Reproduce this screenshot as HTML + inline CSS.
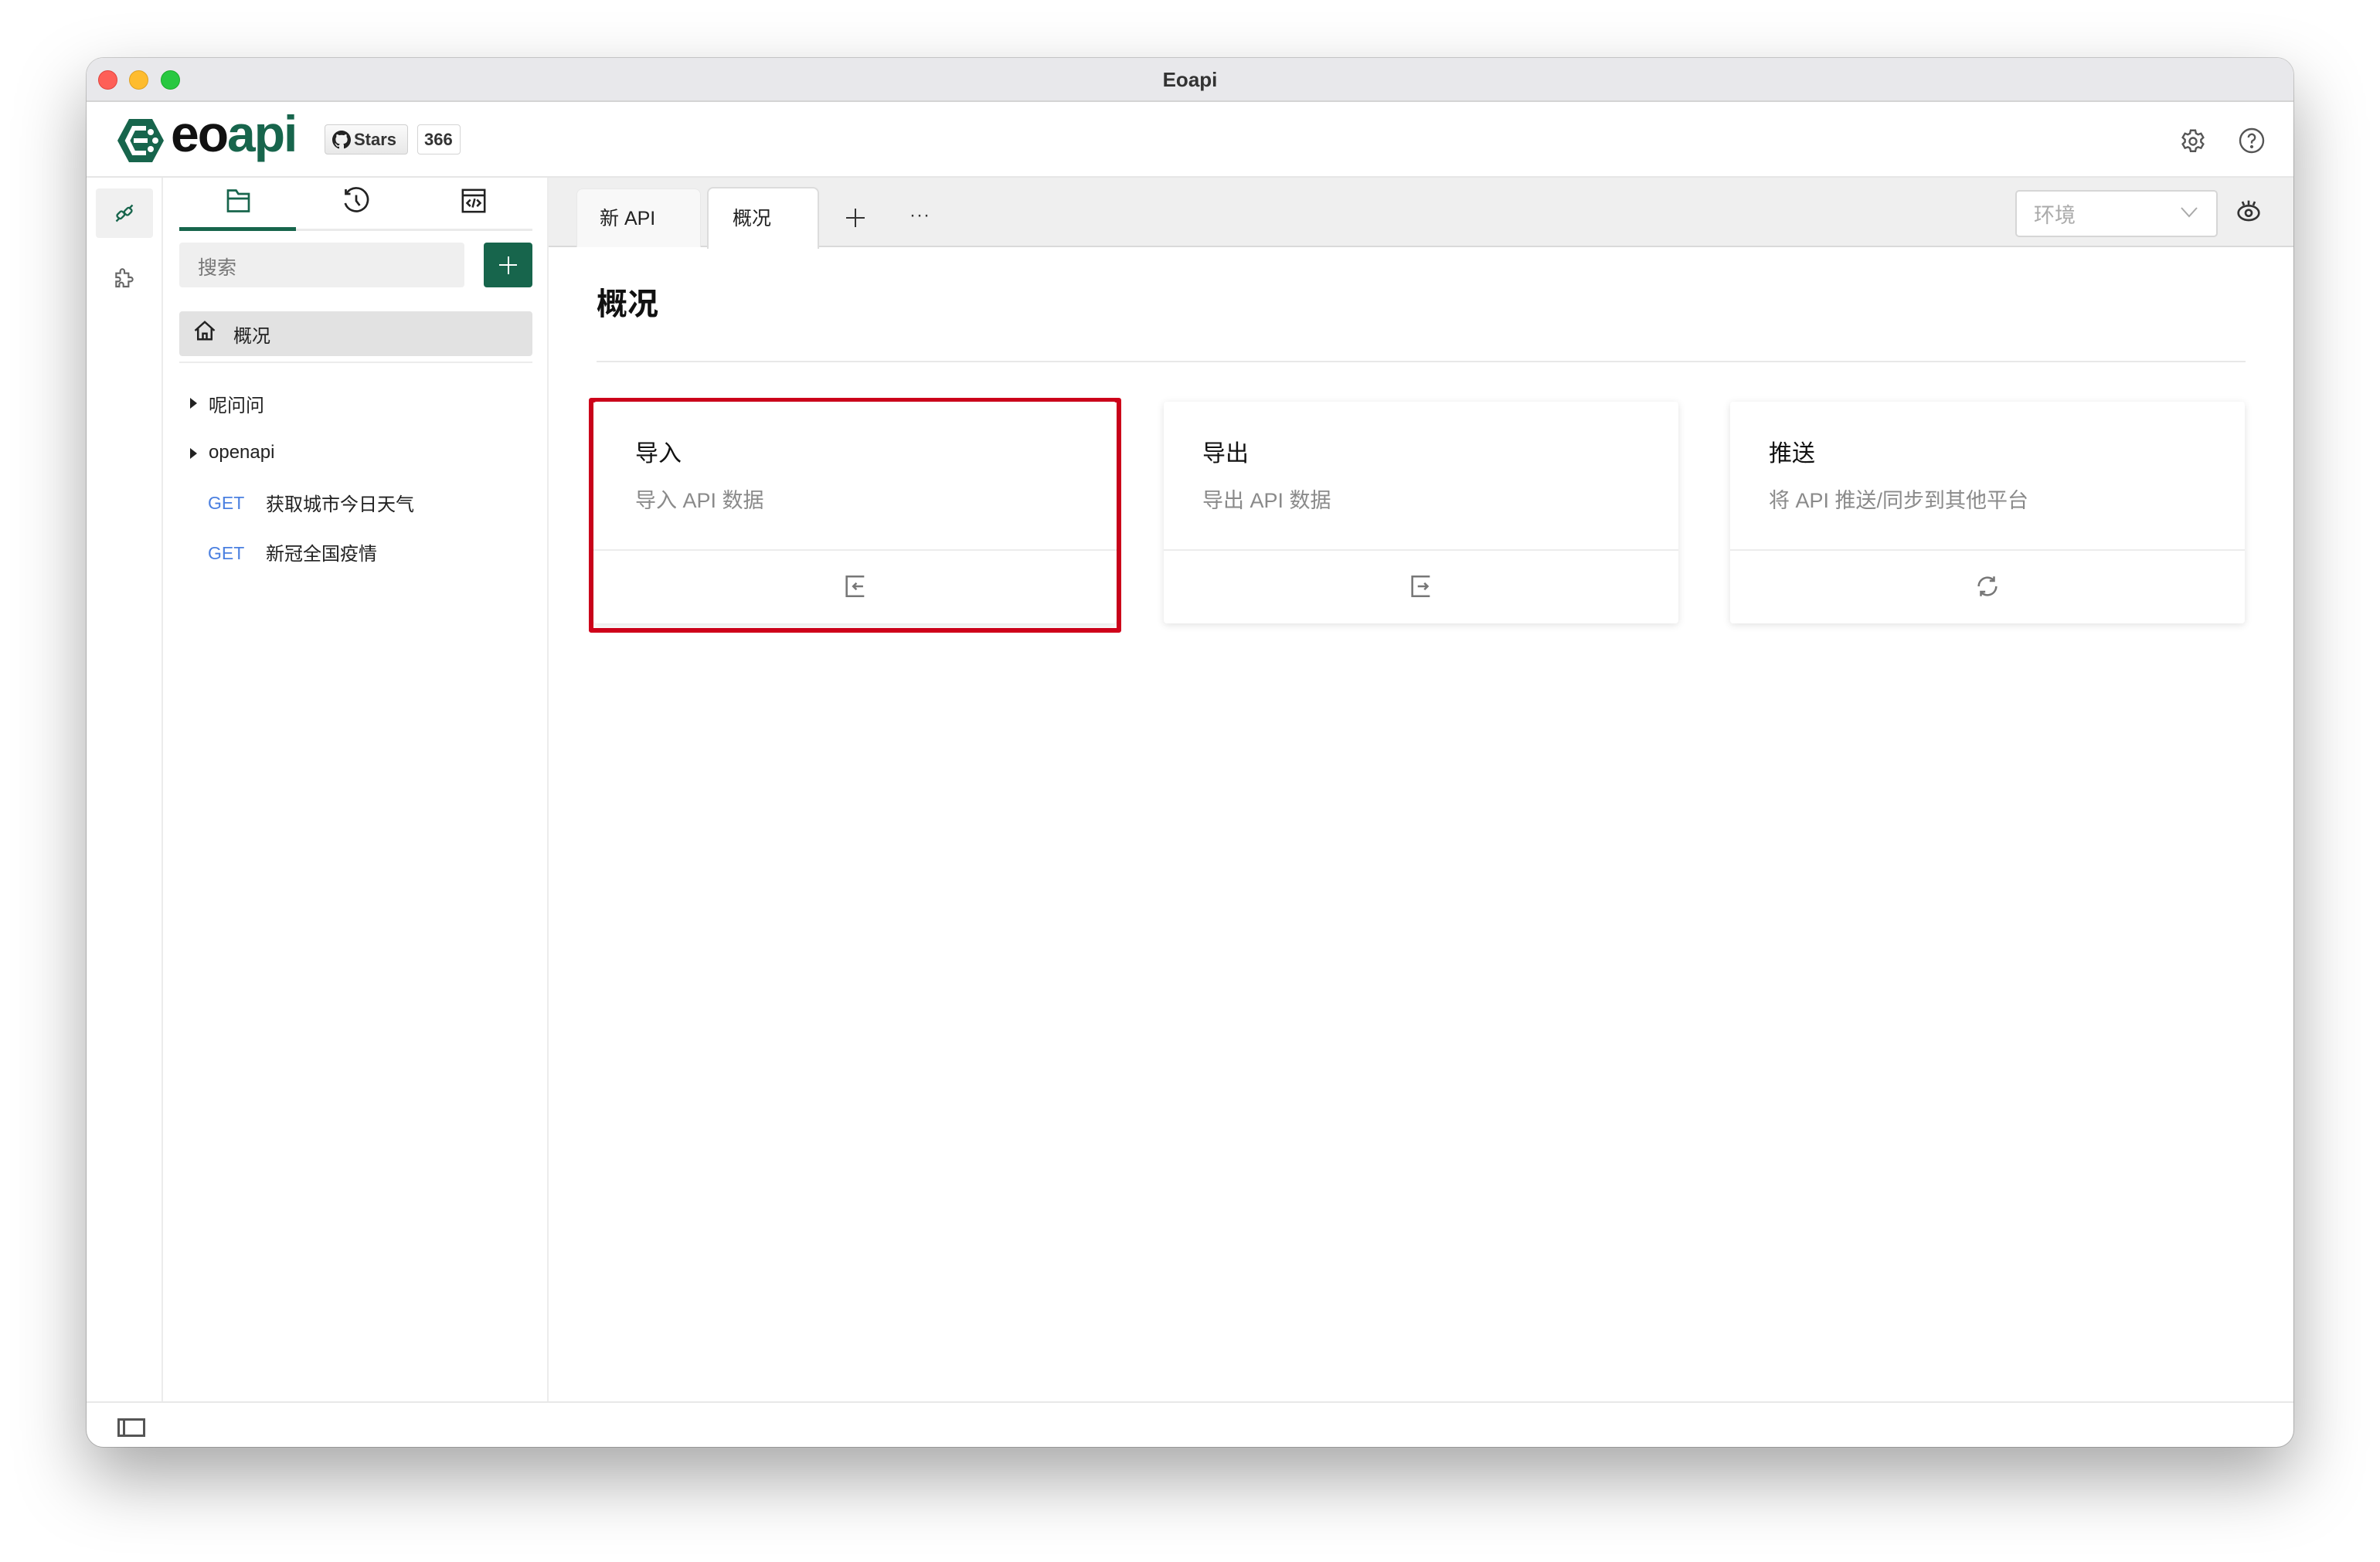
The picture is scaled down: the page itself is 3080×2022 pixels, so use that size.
<!DOCTYPE html>
<html><head><meta charset="utf-8"><style>
*{box-sizing:border-box;margin:0;padding:0}
body{width:3080px;height:2022px;background:#fff;position:relative;overflow:hidden;font-family:"Liberation Sans","Noto Sans CJK SC",sans-serif;color:#222}
.abs{position:absolute}
#win{position:absolute;left:112px;top:75px;width:2856px;height:1798px;border-radius:22px;background:#fff;box-shadow:0 40px 90px rgba(0,0,0,.35),0 0 0 1px rgba(0,0,0,.18);overflow:hidden}
.tl{position:absolute;top:16px;width:25px;height:25px;border-radius:50%}
.txt{white-space:nowrap}
.card{position:absolute;top:445px;height:287px;background:#fff;box-shadow:0 2px 10px rgba(0,0,0,.12);border-radius:4px}
.card .t{position:absolute;left:54px;top:42px;font-size:30px;color:#111}
.card .d{position:absolute;left:54px;top:106px;font-size:27px;color:#8a8a8a}
.card .ln{position:absolute;left:0;right:0;top:191px;height:2px;background:#ececec}
.card svg{position:absolute;left:50%;top:222px;margin-left:-17px}
</style></head><body>
<div id="win">
 <div class="abs" style="left:0;top:0;width:2856px;height:57px;background:#e8e8eb;border-bottom:2px solid #d4d4d4"></div>
 <div class="tl" style="left:15px;background:#fe5f57;border:1px solid #e0443e"></div>
 <div class="tl" style="left:55px;background:#febc2e;border:1px solid #dea123"></div>
 <div class="tl" style="left:96px;background:#28c840;border:1px solid #1aab29"></div>
 <div class="abs txt" style="left:0;width:2856px;top:13px;text-align:center;font-size:26px;font-weight:bold;color:#333">Eoapi</div>
 <div class="abs" style="left:0;top:57px;width:2856px;height:98px;border-bottom:2px solid #e6e6e6"></div>
 <svg class="abs" style="left:39px;top:76px" width="62" height="62" viewBox="0 0 62 62"><path d="M16 3H46L61 31L46 59H16L1 31Z" fill="#17654c"/><path d="M38 15H22L14 31L22 47H38" fill="none" stroke="#fff" stroke-width="6"/><line x1="22" y1="31" x2="40" y2="31" stroke="#fff" stroke-width="6"/><circle cx="44" cy="20" r="4" fill="#fff"/><circle cx="50" cy="31" r="4" fill="#fff"/><circle cx="44" cy="42" r="4" fill="#fff"/></svg>
 <div class="abs txt" style="left:109px;top:60px;font-size:66px;font-weight:bold;letter-spacing:-2px"><span style="color:#111">eo</span><span style="color:#17654c">api</span></div>
 <div class="abs" style="left:308px;top:86px;width:108px;height:39px;border:1px solid #cfcfcf;border-radius:4px;background:linear-gradient(#fafafa,#e8e8e8)"></div>
 <svg class="abs" style="left:318px;top:94px" width="24" height="24" viewBox="0 0 16 16"><path fill="#222" d="M8 0C3.6 0 0 3.6 0 8c0 3.5 2.3 6.5 5.5 7.6.4.1.5-.2.5-.4v-1.4c-2.2.5-2.7-1-2.7-1-.4-.9-.9-1.2-.9-1.2-.7-.5.1-.5.1-.5.8.1 1.2.8 1.2.8.7 1.3 1.9.9 2.300.7.1-.5.3-.9.5-1.1-1.8-.2-3.6-.9-3.6-4 0-.9.3-1.6.8-2.100-.1-.2-.4-1 .1-2.100 0 0 .7-.2 2.2.8.6-.2 1.3-.3 2-.3s1.400.1 2 .3c1.5-1 2.2-.8 2.2-.8.4 1.1.2 1.900.1 2.100.5.6.8 1.300.8 2.100 0 3.100-1.900 3.700-3.600 3.900.3.3.5.8.5 1.5v2.2c0 .2.1.5.6.4C13.7 14.5 16 11.5 16 8c0-4.4-3.6-8-8-8z"/></svg>
 <div class="abs txt" style="left:346px;top:93px;font-size:22px;font-weight:bold;color:#333">Stars</div>
 <div class="abs" style="left:428px;top:86px;width:56px;height:39px;border:1px solid #d4d4d4;border-radius:4px;background:#fff"></div>
 <div class="abs txt" style="left:437px;top:93px;font-size:22px;font-weight:bold;color:#333">366</div>
 <svg class="abs" style="left:2708px;top:90px" width="36" height="36" viewBox="0 0 24 24" fill="none" stroke="#555" stroke-width="1.6"><path d="M10 2.5h4l.6 2.6 1.8 1 2.5-.9 2 3.5-2 1.8v2l2 1.8-2 3.5-2.5-.9-1.8 1-.6 2.6h-4l-.6-2.6-1.8-1-2.5.9-2-3.5 2-1.8v-2l-2-1.8 2-3.5 2.5.9 1.8-1z"/><circle cx="12" cy="12" r="3"/></svg>
 <svg class="abs" style="left:2784px;top:89px" width="36" height="36" viewBox="0 0 24 24" fill="none" stroke="#555" stroke-width="1.6"><circle cx="12" cy="12" r="10"/><path d="M9.2 9.3a2.8 2.8 0 1 1 3.8 2.6c-.7.3-1 .8-1 1.5v1"/><circle cx="12" cy="17.3" r=".6" fill="#555"/></svg>
 <div class="abs" style="left:97px;top:155px;width:2px;height:1584px;background:#ececec"></div>
 <div class="abs" style="left:12px;top:169px;width:74px;height:64px;background:#f0f0f0;border-radius:4px"></div>
 <svg class="abs" style="left:35px;top:187px" width="28" height="28" viewBox="0 0 24 24" fill="none" stroke="#17654c" stroke-width="2"><path d="M3 21l4-4M21 3l-4 4"/><rect x="4" y="11" width="8" height="6" rx="2" transform="rotate(-45 8 14)"/><rect x="12" y="7" width="8" height="6" rx="2" transform="rotate(-45 16 10)"/></svg>
 <svg class="abs" style="left:33px;top:268px" width="32" height="32" viewBox="0 0 24 24" fill="none" stroke="#666" stroke-width="1.6"><path d="M4 8h4V6a2 2 0 1 1 4 0v2h4v4h2a2 2 0 1 1 0 4h-2v5h-5v-2a2 2 0 1 0-4 0v2H4v-5h2a2 2 0 1 0 0-4H4z"/></svg>
 <div class="abs" style="left:596px;top:155px;width:2px;height:1584px;background:#ececec"></div>
 <svg class="abs" style="left:180px;top:168px" width="36" height="34" viewBox="0 0 24 22" fill="none" stroke="#17654c" stroke-width="1.8"><path d="M2 20V2h7l2 3h9v15z"/><path d="M2 9h18"/></svg>
 <svg class="abs" style="left:331px;top:166px" width="36" height="38" viewBox="0 0 24 24" fill="none" stroke="#222" stroke-width="1.8"><path d="M4 5A10 10 0 1 1 2.5 14"/><path d="M3 2v4h4"/><path d="M12 7v5l3 4"/></svg>
 <svg class="abs" style="left:484px;top:168px" width="34" height="34" viewBox="0 0 24 24" fill="none" stroke="#222" stroke-width="1.8"><rect x="2" y="2" width="20" height="20"/><path d="M2 7h20M9 11l-3 3 3 3M15 11l3 3-3 3M13 10l-2 8"/></svg>
 <div class="abs" style="left:120px;top:221px;width:457px;height:3px;background:#eaeaea"></div>
 <div class="abs" style="left:120px;top:219px;width:151px;height:5px;background:#17654c"></div>
 <div class="abs" style="left:120px;top:239px;width:369px;height:58px;background:#efefef;border-radius:4px"></div>
 <div class="abs txt" style="left:144px;top:252px;font-size:25px;color:#777">搜索</div>
 <div class="abs" style="left:514px;top:239px;width:63px;height:58px;background:#17654c;border-radius:4px"></div>
 <div class="abs" style="left:534px;top:267px;width:23px;height:2px;background:#fff"></div>
 <div class="abs" style="left:545px;top:257px;width:2px;height:23px;background:#fff"></div>
 <div class="abs" style="left:120px;top:328px;width:457px;height:58px;background:#e2e2e2;border-radius:4px"></div>
 <svg class="abs" style="left:138px;top:338px" width="30" height="30" viewBox="0 0 24 24" fill="none" stroke="#222" stroke-width="2"><path d="M2 12L12 3l10 9M5 10v11h14V10M10 21v-6h4v6"/></svg>
 <div class="abs txt" style="left:190px;top:340px;font-size:24px">概况</div>
 <div class="abs" style="left:120px;top:393px;width:457px;height:2px;background:#ececec"></div>
 <div class="abs" style="left:134px;top:440px;width:0;height:0;border-left:9px solid #222;border-top:7px solid transparent;border-bottom:7px solid transparent"></div>
 <div class="abs txt" style="left:158px;top:430px;font-size:24px">呢问问</div>
 <div class="abs" style="left:134px;top:505px;width:0;height:0;border-left:9px solid #222;border-top:7px solid transparent;border-bottom:7px solid transparent"></div>
 <div class="abs txt" style="left:158px;top:497px;font-size:24px">openapi</div>
 <div class="abs txt" style="left:157px;top:563px;font-size:23px;color:#4a7fe0">GET</div>
 <div class="abs txt" style="left:232px;top:558px;font-size:24px">获取城市今日天气</div>
 <div class="abs txt" style="left:157px;top:628px;font-size:23px;color:#4a7fe0">GET</div>
 <div class="abs txt" style="left:232px;top:622px;font-size:24px">新冠全国疫情</div>
 <div class="abs" style="left:598px;top:155px;width:2258px;height:90px;background:#efefef;border-bottom:2px solid #d9d9d9"></div>
 <div class="abs" style="left:634px;top:169px;width:161px;height:76px;background:#f8f8f8;border-radius:8px 8px 0 0;border:1px solid #e8e8e8;border-bottom:none"></div>
 <div class="abs txt" style="left:664px;top:188px;font-size:25px">新 API</div>
 <div class="abs" style="left:803px;top:167px;width:145px;height:80px;background:#fff;border-radius:8px 8px 0 0;border:2px solid #dcdcdc;border-bottom:none"></div>
 <div class="abs txt" style="left:836px;top:188px;font-size:25px">概况</div>
 <div class="abs" style="left:983px;top:206px;width:24px;height:2px;background:#333"></div>
 <div class="abs" style="left:994px;top:195px;width:2px;height:24px;background:#333"></div>
 <div class="abs txt" style="left:1065px;top:190px;font-size:24px;color:#333;letter-spacing:1px">···</div>
 <div class="abs" style="left:2496px;top:171px;width:262px;height:61px;background:#fff;border:2px solid #d6d6d6;border-radius:5px"></div>
 <div class="abs txt" style="left:2520px;top:182px;font-size:27px;color:#aaa">环境</div>
 <svg class="abs" style="left:2710px;top:193px" width="22" height="14" viewBox="0 0 22 14" fill="none" stroke="#aaa" stroke-width="2"><path d="M1 1l10 11L21 1"/></svg>
 <svg class="abs" style="left:2782px;top:182px" width="32" height="32" viewBox="0 0 24 24" fill="none" stroke="#333" stroke-width="2"><ellipse cx="12" cy="14" rx="10" ry="7"/><circle cx="12" cy="14" r="3"/><path d="M12 2v4M6 3l1.5 3.5M18 3l-1.5 3.5"/></svg>
 <div class="abs txt" style="left:660px;top:286px;font-size:40px;font-weight:bold;color:#111">概况</div>
 <div class="abs" style="left:660px;top:392px;width:2134px;height:2px;background:#e8e8e8"></div>
 <div class="abs" style="left:650px;top:440px;width:689px;height:304px;border:6px solid #d0021b;border-radius:3px"></div>
 <div class="card" style="left:656px;width:677px">
  <div class="t txt">导入</div><div class="d txt">导入 API 数据</div><div class="ln"></div>
  <svg width="34" height="34" viewBox="0 0 24 24" fill="none" stroke="#777" stroke-width="1.8"><path d="M20 3H4v18h16M19 12H10M13 9l-3 3 3 3"/></svg>
 </div>
 <div class="card" style="left:1394px;width:666px">
  <div class="t txt" style="left:50px">导出</div><div class="d txt" style="left:50px">导出 API 数据</div><div class="ln"></div>
  <svg width="34" height="34" viewBox="0 0 24 24" fill="none" stroke="#777" stroke-width="1.8"><path d="M20 3H4v18h16M9 12h9M15 9l3 3-3 3"/></svg>
 </div>
 <div class="card" style="left:2127px;width:666px">
  <div class="t txt" style="left:50px">推送</div><div class="d txt" style="left:50px">将 API 推送/同步到其他平台</div><div class="ln"></div>
  <svg width="34" height="34" viewBox="0 0 24 24" fill="none" stroke="#777" stroke-width="1.8"><path d="M4 12a8 8 0 0 1 14-5.3M20 12a8 8 0 0 1-14 5.3M18 3v4h-4M6 21v-4h4"/></svg>
 </div>
 <div class="abs" style="left:0;top:1739px;width:2856px;height:2px;background:#e8e8e8"></div>
 <div class="abs" style="left:40px;top:1761px;width:36px;height:24px;border:3px solid #555"></div>
 <div class="abs" style="left:47px;top:1761px;width:3px;height:24px;background:#555"></div>
</div>
</body></html>
